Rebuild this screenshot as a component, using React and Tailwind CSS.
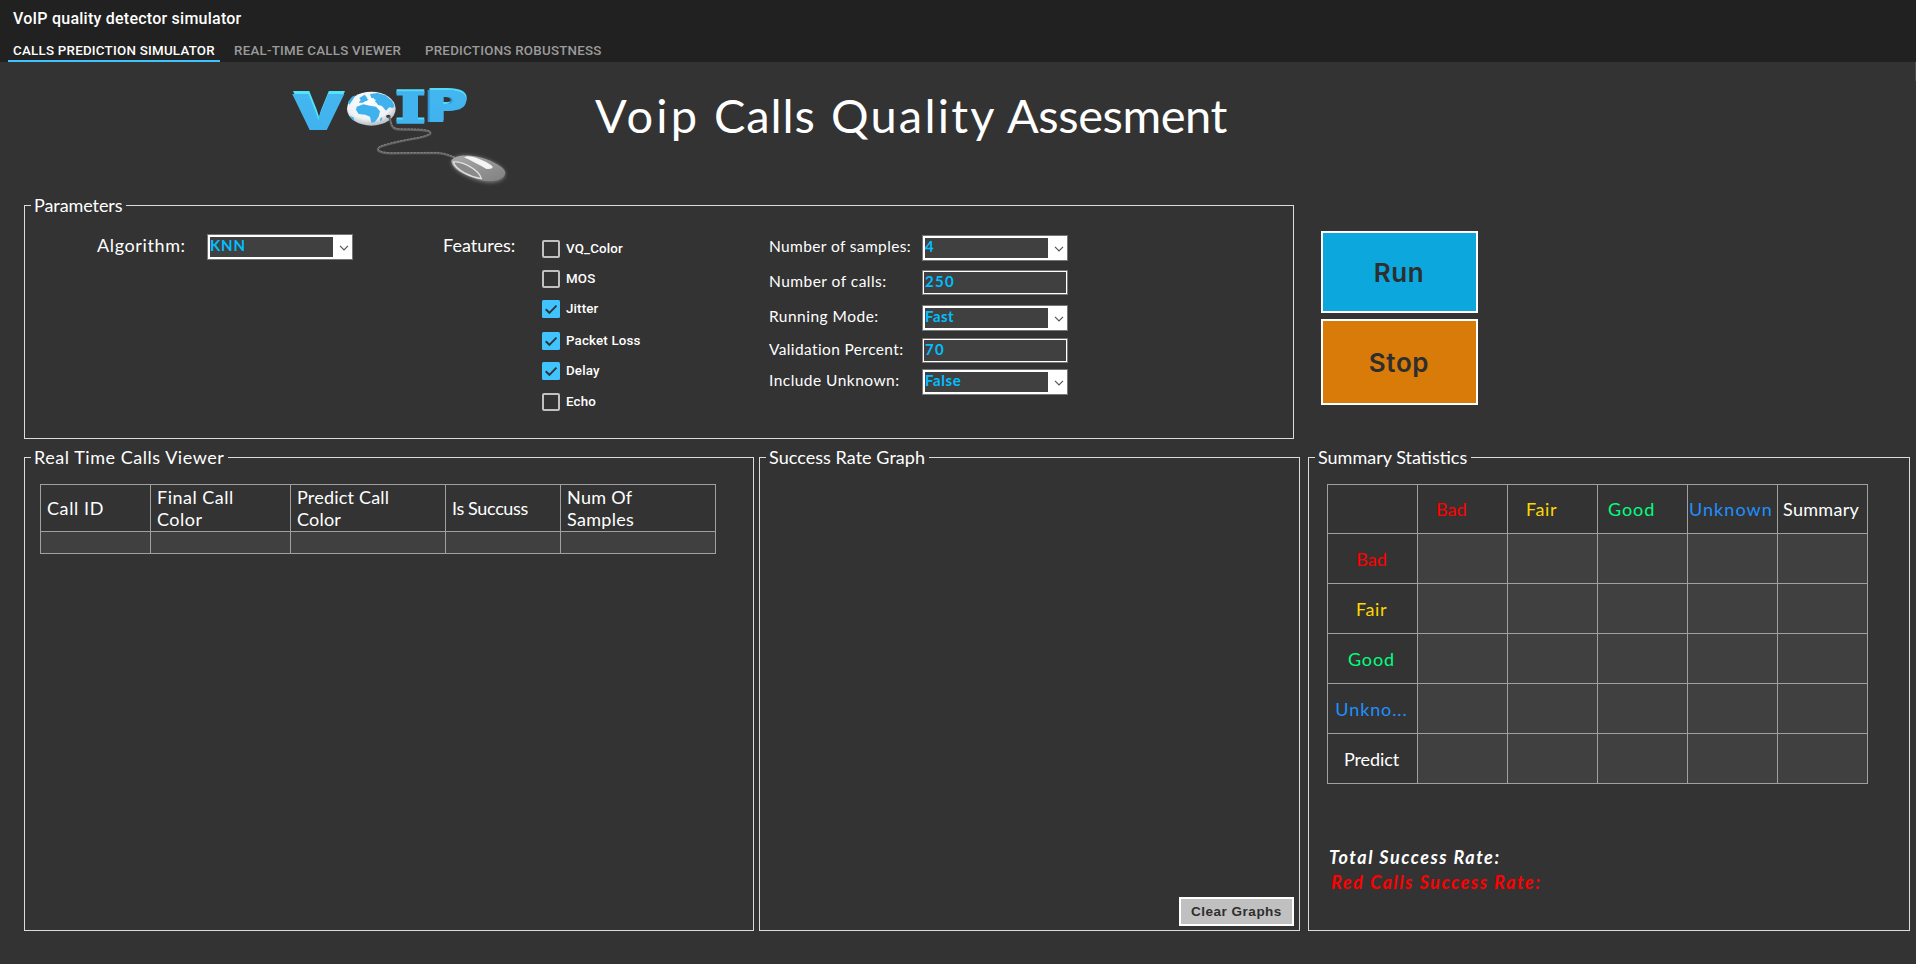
import React from "react";

function Group({ title, tracking = "", className, children }) {
  return (
    <section className={"border border-[#dcdcdc] " + className}>
      <h2 className={"-mt-[13px] ml-[6px] block h-6 w-fit bg-[#333333] pr-[4px] pl-[3px] text-[18px] leading-6 " + tracking}>
        {title}
      </h2>
      {children}
    </section>
  );
}

function Combo({ children, tracking = "" }) {
  return (
    <div className="flex h-[26px] w-[146px] border border-[#767676] bg-white p-[2px]">
      <div className={"h-5 w-[123px] bg-[#404040] text-[15px] leading-[16px] font-bold text-[#00bfff] " + tracking}>
        {children}
      </div>
      <svg className="mt-[8px] ml-[6px] h-[6px] w-[10px]" viewBox="0 0 10 6" fill="none" stroke="#555" strokeWidth="1.2">
        <path d="M1 0.8 L5 4.8 L9 0.8" />
      </svg>
    </div>
  );
}

function Field({ children }) {
  return (
    <div className="h-[25px] w-[146px] border border-[#767676] bg-white p-px">
      <div className="h-full bg-[#404040] pl-px text-[15px] leading-[18px] font-bold tracking-[1.3px] text-[#00bfff]">
        {children}
      </div>
    </div>
  );
}

function Check({ label, checked, className = "" }) {
  return (
    <label className={"flex h-[18px] items-center gap-[6px] " + className}>
      {checked ? (
        <svg className="size-[18px]" viewBox="0 0 18 18">
          <rect width="18" height="18" rx="1.5" fill="#40c4ff" />
          <path d="M3.7 9.3 L7.4 12.8 L14.5 5.6" fill="none" stroke="#333" strokeWidth="1.9" />
        </svg>
      ) : (
        <span className="size-[18px] rounded-[2px] border-2 border-[#c1c1c1]" />
      )}
      <span className="font-['Roboto',sans-serif] text-[13.33px] leading-[18px] font-medium tracking-[0.16px]">{label}</span>
    </label>
  );
}

function Logo() {
  return (
    <svg className="h-[130px] w-[260px] shrink-0" viewBox="0 0 780 390">
      <defs>
        <linearGradient id="blue" x1="0" y1="0" x2="0" y2="1">
          <stop offset="0" stopColor="#45b9f0" />
          <stop offset="1" stopColor="#3fb0ee" />
        </linearGradient>
        <radialGradient id="globe" cx="0.45" cy="0.35" r="0.65">
          <stop offset="0" stopColor="#ffffff" />
          <stop offset="0.7" stopColor="#f0f2f4" />
          <stop offset="1" stopColor="#b4bcc2" />
        </radialGradient>
        <linearGradient id="mouse" x1="0" y1="0" x2="1" y2="1">
          <stop offset="0" stopColor="#a9a9a9" />
          <stop offset="1" stopColor="#808080" />
        </linearGradient>
        <filter id="glow" x="-20%" y="-20%" width="140%" height="150%">
          <feGaussianBlur stdDeviation="7" />
        </filter>
      </defs>
      <g fontFamily="'Open Sans', sans-serif" fontWeight="800">
        <text x="69" y="172" fontSize="146" textLength="156" lengthAdjust="spacingAndGlyphs" fill="#52e4f8">V</text>
        <text x="67" y="179" fontSize="146" textLength="156" lengthAdjust="spacingAndGlyphs" fill="url(#blue)">V</text>
      </g>
      <g fontFamily="'DejaVu Serif', serif" fontWeight="700">
        <text x="374" y="154" fontSize="130" textLength="94" lengthAdjust="spacingAndGlyphs" fill="#52dcf8" stroke="#52dcf8" strokeWidth="5">I</text>
        <text x="374" y="159" fontSize="130" textLength="94" lengthAdjust="spacingAndGlyphs" fill="#41b3ee" stroke="#41b3ee" strokeWidth="5">I</text>
      </g>
      <g fontFamily="'Open Sans', sans-serif" fontWeight="800">
        <text x="462" y="150" fontSize="134" textLength="136" lengthAdjust="spacingAndGlyphs" fill="#52dcf8">P</text>
        <text x="457" y="156" fontSize="134" textLength="134" lengthAdjust="spacingAndGlyphs" fill="#2f95d6">P</text>
        <text x="463" y="155" fontSize="134" textLength="134" lengthAdjust="spacingAndGlyphs" fill="url(#blue)">P</text>
      </g>
      <ellipse cx="304" cy="116" rx="73" ry="51" fill="url(#globe)" />
      <g fill="#3fb2ee">
        <path d="M260 110 L280 103 L300 107 L318 110 L330 124 L326 140 L314 157 L304 158 L300 140 L286 134 L266 132 L258 120 Z" />
        <path d="M300 72 L322 69 L346 76 L366 92 L374 108 L368 114 L358 112 L348 122 L336 108 L322 104 L312 98 L318 90 L304 84 Z" />
        <path d="M268 84 L284 74 L290 82 L298 88 L288 94 L278 98 L266 98 L272 90 Z" />
        <path d="M234 96 L246 80 L256 76 L248 90 L238 104 Z" />
        <path d="M238 138 L250 142 L254 154 L246 148 Z" />
        <path d="M331 145 l6 -3 l-2 9 l-5 3 Z" />
      </g>
      <path d="M284 96 L300 97 L310 94 L318 100 L328 116 L336 120 M292 84 L300 90 L312 86" fill="none" stroke="#fff" strokeWidth="4" />
      <ellipse cx="355" cy="139" rx="7" ry="5" fill="#3a3f44" />
      <path d="M358 143 C364 150 358 176 384 178 C420 180 452 176 476 184 C492 190 470 200 446 204 C400 212 350 222 328 232 C314 242 334 250 360 250 L500 249 C524 250 536 256 552 262" fill="none" stroke="#646464" strokeWidth="6.5" strokeLinecap="round" />
      <path d="M360 146 C364 152 360 175 386 176 C420 178 452 174 476 182 C490 188 470 197 446 202 C400 210 350 219 328 230 C316 240 334 247 360 248 L500 247 C524 248 536 254 552 260" fill="none" stroke="#929292" strokeWidth="2" strokeDasharray="6 4" />
      <path d="M546 274 C556 256 590 254 630 264 C672 276 702 294 704 312 C704 330 676 340 642 334 C600 326 546 300 546 274 Z" fill="#b5b5b5" opacity="0.7" filter="url(#glow)" />
      <path d="M544 272 C552 256 590 252 630 262 C672 274 704 292 706 308 C704 328 676 336 642 332 C600 324 544 300 544 272 Z" fill="url(#mouse)" />
      <path d="M550 276 C580 274 628 300 634 326 C604 322 556 300 550 276 Z" fill="#8a8a8a" stroke="#e0e0e0" strokeWidth="4" />
      <path d="M582 262 C590 256 606 258 620 264 C640 272 660 280 668 290 C668 296 658 298 648 296 C628 286 606 272 582 262 Z" fill="#f4f4f4" />
    </svg>
  );
}

const callCols = [
  ["w-[110px]", ["Call ID"], "tracking-[0.6px]"],
  ["w-[140px]", ["Final Call", "Color"], "tracking-[0.5px]"],
  ["w-[155px]", ["Predict Call", "Color"], "tracking-[0.2px]"],
  ["w-[115px]", ["Is Succuss"], "tracking-[-0.35px]"],
  ["w-[155px]", ["Num Of", "Samples"], "tracking-[0.3px]"],
];

const colHeads = [
  ["", ""],
  ["Bad", "pl-[18px] text-[#ff0000]"],
  ["Fair", "pl-[18px] tracking-[0.6px] text-[#ffd700]"],
  ["Good", "pl-[10px] tracking-[0.9px] text-[#00ff7f]"],
  ["Unknown", "pl-px tracking-[1.05px] text-[#1e90ff]"],
  ["Summary", "pl-[5px] tracking-[0.3px]"],
];

const rowHeads = [
  ["Bad", "text-[#ff0000]"],
  ["Fair", "tracking-[0.6px] text-[#ffd700]"],
  ["Good", "tracking-[0.9px] text-[#00ff7f]"],
  ["Unkno...", "tracking-[0.9px] text-[#1e90ff]"],
  ["Predict", "tracking-[-0.1px]"],
];

const cell = "border-r border-b border-[#a0a0a0] ";

export default function App() {
  return (
    <div className="h-[964px] w-[1916px] overflow-hidden bg-[#333333] font-['Lato',sans-serif] text-white">
      <header className="h-[62px] bg-[#212121] font-['Roboto',sans-serif] font-medium">
        <h1 className="pt-[9px] pl-[13px] text-[16px] leading-5 tracking-[0.24px]">VoIP quality detector simulator</h1>
        <nav className="mt-[12px] flex pl-[8px] text-[13.33px] leading-[19px] tracking-[0.24px] text-[#9b9b9b]">
          <a className="h-[21px] w-[212px] border-b-2 border-[#40c4ff] pl-[5px] text-white">CALLS PREDICTION SIMULATOR</a>
          <a className="w-[191px] pl-[14px]">REAL-TIME CALLS VIEWER</a>
          <a className="pl-[14px]">PREDICTIONS ROBUSTNESS</a>
        </nav>
      </header>

      <main>
        <div className="flex h-[143px]">
          <div className="pt-2 pl-[270px]"><Logo /></div>
          <div className="mt-[25px] ml-[65px] flex text-[47px] leading-[56px] whitespace-pre">
            <span className="w-[119px] tracking-[3.2px]">Voip </span>
            <span className="w-[117px] tracking-[0.9px]">Calls </span>
            <span className="w-[176px] tracking-[2.2px]">Quality </span>
            <span className="tracking-[-0.45px]">Assesment</span>
          </div>
          <div className="ml-auto h-[19px] w-px bg-[#4d4d4d]" />
        </div>

        <div className="flex h-[252px] pl-6">
          <Group title="Parameters" tracking="tracking-[-0.08px]" className="h-[234px] w-[1270px]">
            <div className="flex pl-[72px] text-[18px] leading-6">
              <div className="w-[110px] pt-[16px] tracking-[0.62px]">Algorithm:</div>
              <div className="pt-[17px]"><Combo tracking="tracking-[0.8px]">KNN</Combo></div>
              <div className="ml-[90px] w-[99px] pt-[16px]">Features:</div>
              <div className="w-[227px] pt-[23px]">
                <Check label="VQ_Color" />
                <Check label="MOS" className="mt-3" />
                <Check label="Jitter" className="mt-3" checked />
                <Check label="Packet Loss" className="mt-[14px]" checked />
                <Check label="Delay" className="mt-3" checked />
                <Check label="Echo" className="mt-[13px]" />
              </div>
              <div className="grid grid-cols-[153px_146px] grid-rows-[35px_35px_33px_31px_26px] pt-[18px] text-[15.5px] leading-[22px]">
                <span className="tracking-[0.38px]">Number of samples:</span><Combo>4</Combo>
                <span className="tracking-[0.48px]">Number of calls:</span><Field>250</Field>
                <span className="tracking-[0.48px]">Running Mode:</span><Combo tracking="tracking-[0.4px]">Fast</Combo>
                <span className="tracking-[0.38px]">Validation Percent:</span><Field>70</Field>
                <span className="tracking-[0.46px]">Include Unknown:</span><Combo tracking="tracking-[0.6px]">False</Combo>
              </div>
            </div>
          </Group>
          <div className="ml-[27px] flex flex-col gap-[6px] pt-[26px] font-['Inter',sans-serif] text-[26px] font-semibold tracking-[0.6px] text-[#2e2e2e]">
            <button className="h-[82px] w-[157px] border-2 border-white bg-[#0ba7dd] pr-px">Run</button>
            <button className="h-[86px] w-[157px] border-2 border-white bg-[#d97b08] pr-px">Stop</button>
          </div>
        </div>

        <div className="flex h-[474px] pl-6">
          <Group title="Real Time Calls Viewer" tracking="tracking-[0.54px]" className="w-[730px]">
            <div className="mt-[15px] ml-[15px] w-fit border-t border-l border-[#a0a0a0] text-[18px] leading-[22px]">
              <div className="flex h-[47px]">
                {callCols.map(([cls, lines, tracking], i) => (
                  <div key={i} className={"flex flex-col justify-center pl-[6px] " + cell + cls + " " + tracking}>
                    {lines.map((l) => <div key={l}>{l}</div>)}
                  </div>
                ))}
              </div>
              <div className="flex h-[22px]">
                {callCols.map(([cls], i) => (
                  <div key={i} className={"bg-[#404040] " + cell + cls} />
                ))}
              </div>
            </div>
          </Group>

          <Group title="Success Rate Graph" tracking="tracking-[0.05px]" className="ml-[5px] flex w-[541px] flex-col">
            <button className="mt-auto mr-[5px] mb-[4px] h-[29px] w-[115px] self-end border-2 border-white bg-[#c0c0c0] pt-px font-['Liberation_Sans',sans-serif] text-[13.5px] font-bold tracking-[0.5px] text-[#2e2e2e]">
              Clear Graphs
            </button>
          </Group>

          <Group title="Summary Statistics" className="ml-[8px] w-[602px]">
            <div className="mt-[15px] ml-[18px] grid w-[541px] grid-cols-[repeat(6,90px)] grid-rows-[49px_repeat(5,50px)] border-t border-l border-[#a0a0a0] text-[18px] leading-6">
              {colHeads.map(([t, cls], i) => (
                <div key={i} className={"flex items-center " + cell + cls}>{t}</div>
              ))}
              {rowHeads.map(([t, cls]) => (
                <React.Fragment key={t}>
                  <div className={"flex items-center justify-center pt-px pr-[2px] " + cell + cls}>{t}</div>
                  {[0, 1, 2, 3, 4].map((c) => <div key={c} className={"bg-[#404040] " + cell} />)}
                </React.Fragment>
              ))}
            </div>
            <div className="mt-[61px] ml-[20px] text-[18px] leading-[25px] font-bold tracking-[1.5px] italic">
              <div>Total Success Rate:</div>
              <div className="pl-[2px] tracking-[1.56px] text-[#ff0000]">Red Calls Success Rate:</div>
            </div>
          </Group>
        </div>
      </main>
    </div>
  );
}
